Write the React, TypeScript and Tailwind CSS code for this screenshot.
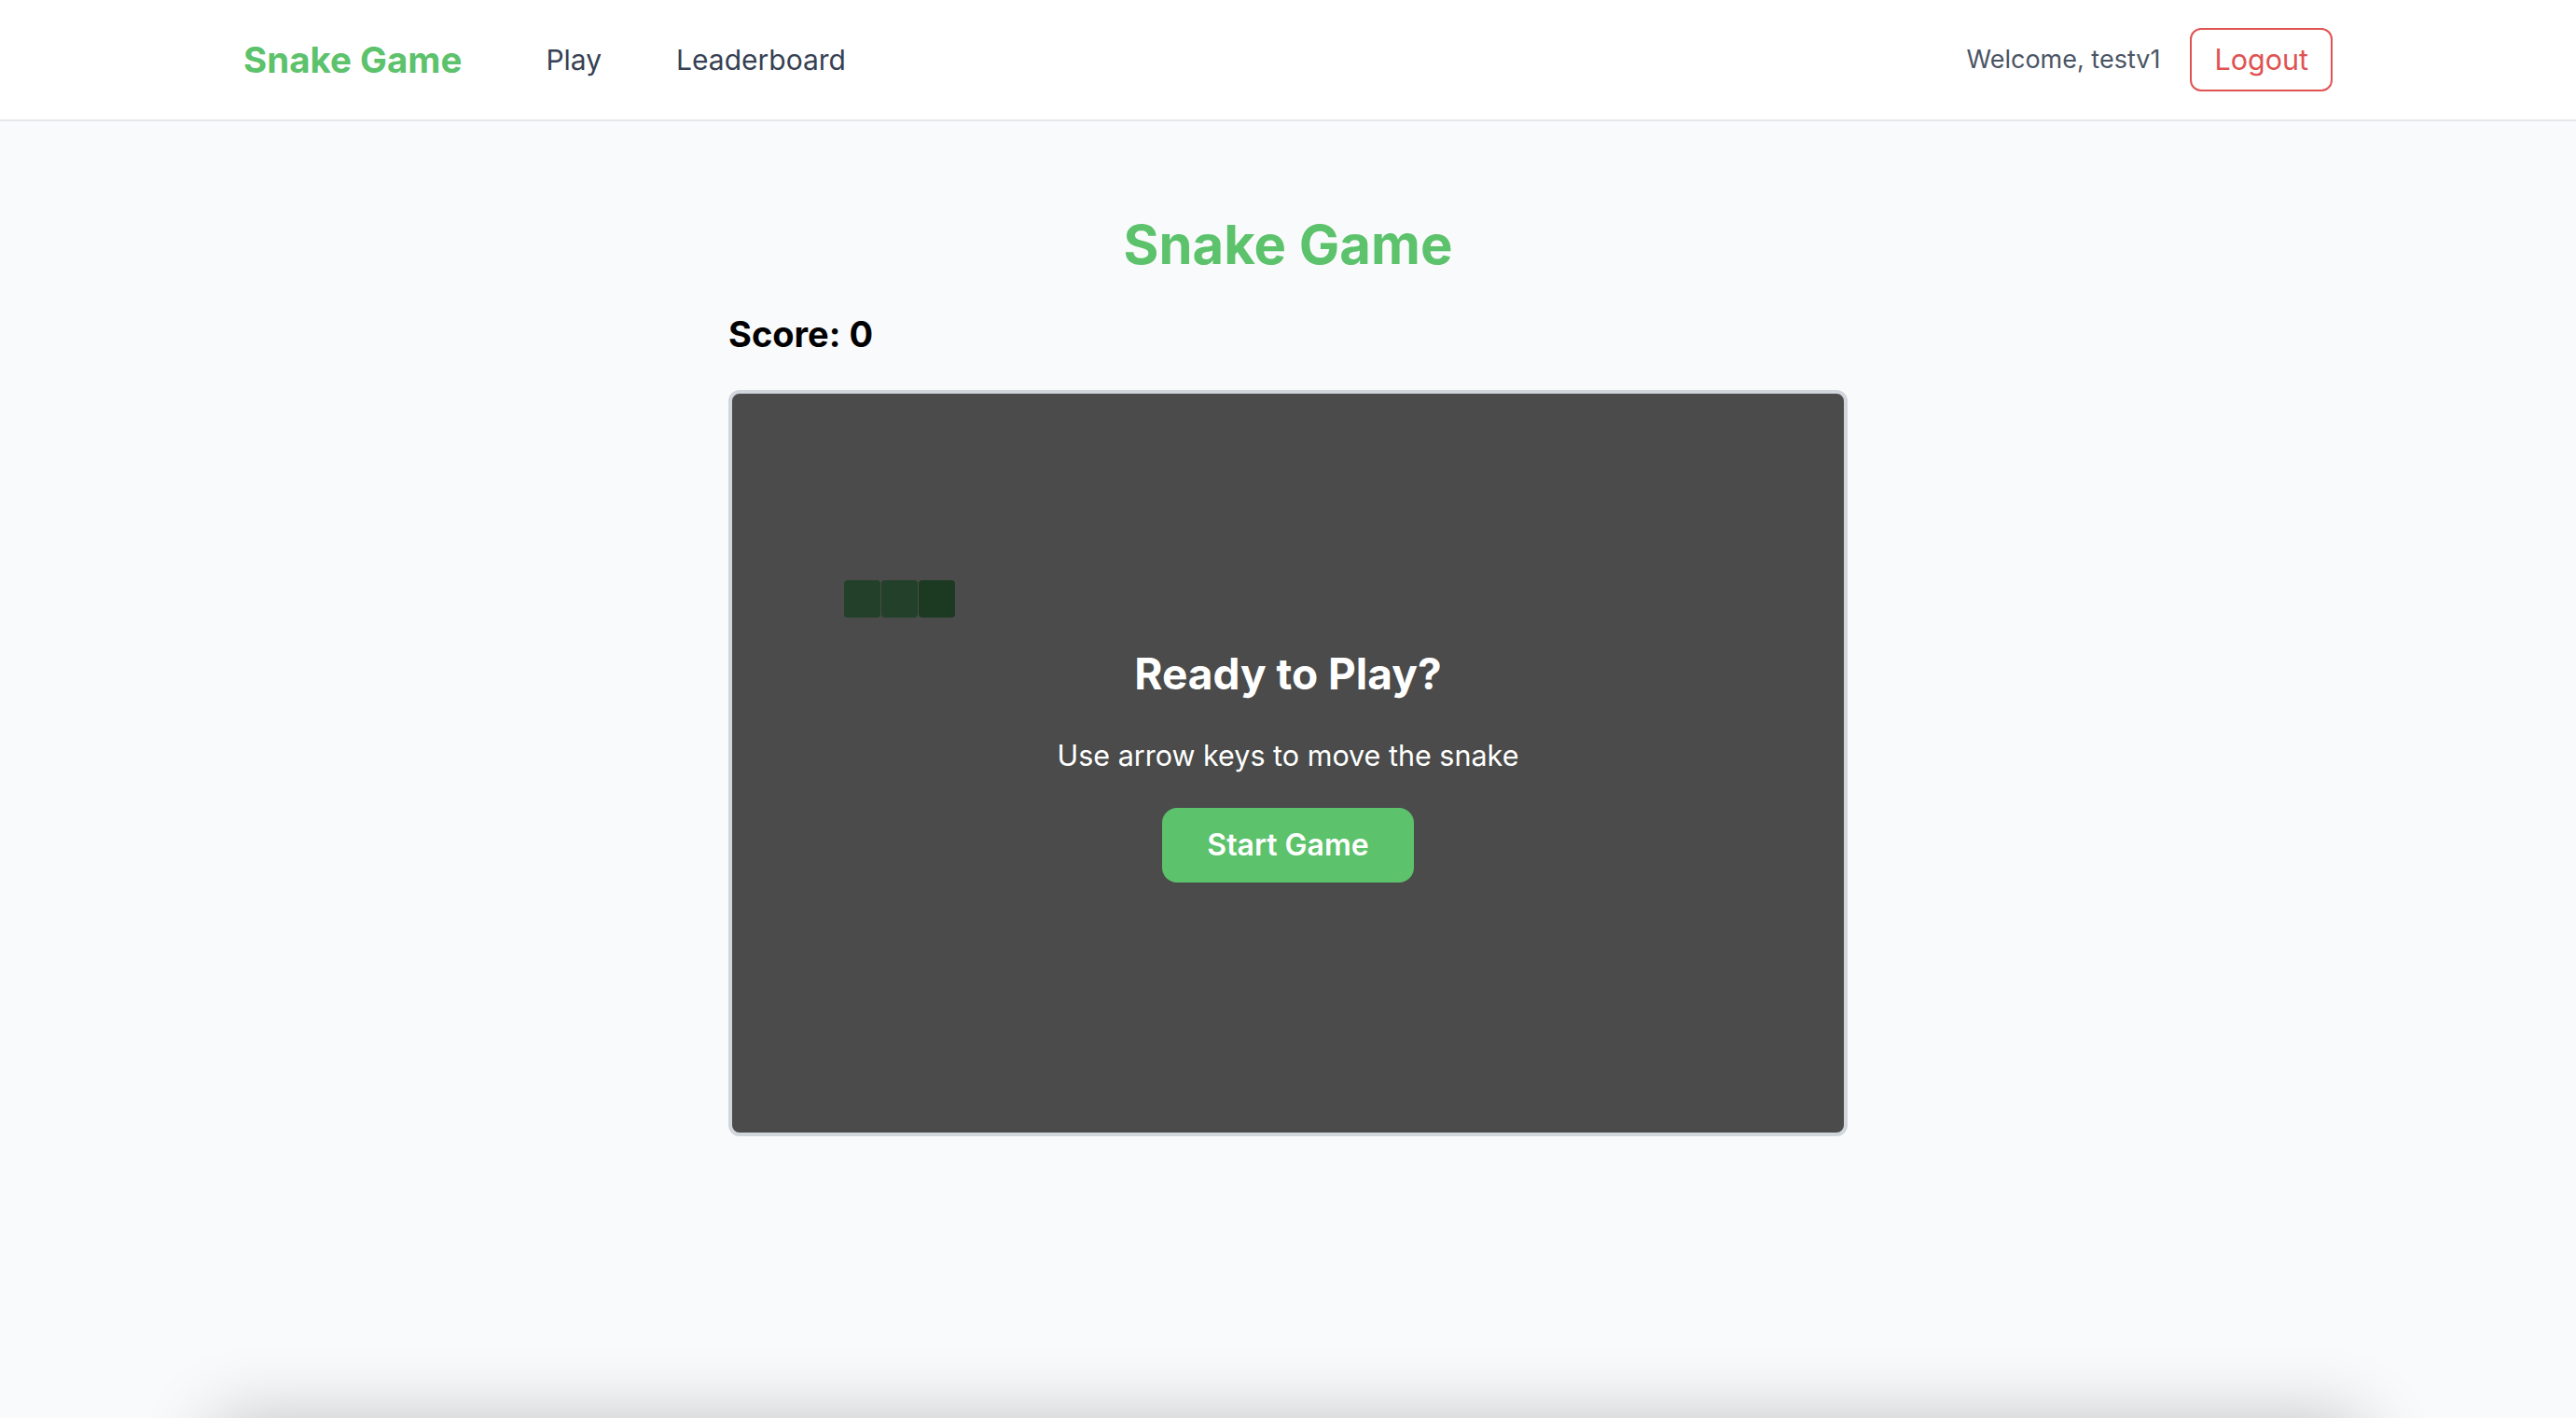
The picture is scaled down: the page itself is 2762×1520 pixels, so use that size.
import React from 'react';

const snake = [
  { x: 3, y: 5, head: false },
  { x: 4, y: 5, head: false },
  { x: 5, y: 5, head: true },
];

const App = () => {
  return (
    <div className="min-h-[1520px] bg-[#f9fafb] font-['Inter','Liberation_Sans',sans-serif]">
      <header className="bg-white border-b-2 border-gray-200">
        <div className="max-w-[2304px] mx-auto px-8 h-32 flex items-center justify-between">
          <div className="flex items-center">
            <a href="#" className="text-[38.5px] leading-[56px] font-bold text-[#5cc26b]">
              Snake Game
            </a>
            <nav className="ml-[90px] flex items-center gap-[80px] text-[30px] leading-[48px] text-gray-700">
              <a href="#">Play</a>
              <a href="#">Leaderboard</a>
            </nav>
          </div>
          <div className="flex items-center gap-8">
            <span className="text-[27px] leading-[40px] text-gray-600">Welcome, testv1</span>
            <button className="px-6 py-2 border-2 border-[#e05353] text-[#e05353] rounded-[12px] text-[30.5px] leading-[48px]">
              Logout
            </button>
          </div>
        </div>
      </header>

      <main className="pt-24">
        <div className="w-[1200px] mx-auto">
          <h1 className="text-[58px] leading-[72px] font-bold text-center text-[#5cc26b] mb-8">
            Snake Game
          </h1>
          <p className="text-[38px] leading-[56px] font-bold text-black mb-8">Score: 0</p>

          <div className="relative w-[1200px] h-[800px] border-4 border-gray-300 rounded-[12px] bg-[#4a4b4a] overflow-hidden">
            {snake.map((s, i) => (
              <div
                key={i}
                className={`absolute w-[39px] h-[40px] rounded-[4px] ${s.head ? 'bg-[#1c3a22]' : 'bg-[#22402a]'}`}
                style={{ left: s.x * 40, top: s.y * 40 }}
              />
            ))}
            <div className="absolute inset-0 flex flex-col items-center justify-center text-white">
              <h2 className="text-[46px] leading-[64px] font-bold mb-8">Ready to Play?</h2>
              <p className="text-[30.5px] leading-[48px] mb-8">Use arrow keys to move the snake</p>
              <button className="bg-[#5cc26b] text-white font-semibold text-[32px] leading-[48px] px-12 py-4 rounded-[16px]">
                Start Game
              </button>
            </div>
          </div>
        </div>

        <footer className="max-w-[2304px] mx-auto mt-[305px] h-64 bg-white rounded-[16px] shadow-[0_0_80px_rgba(0,0,0,0.24)]" />
      </main>
    </div>
  );
};

export default App;
